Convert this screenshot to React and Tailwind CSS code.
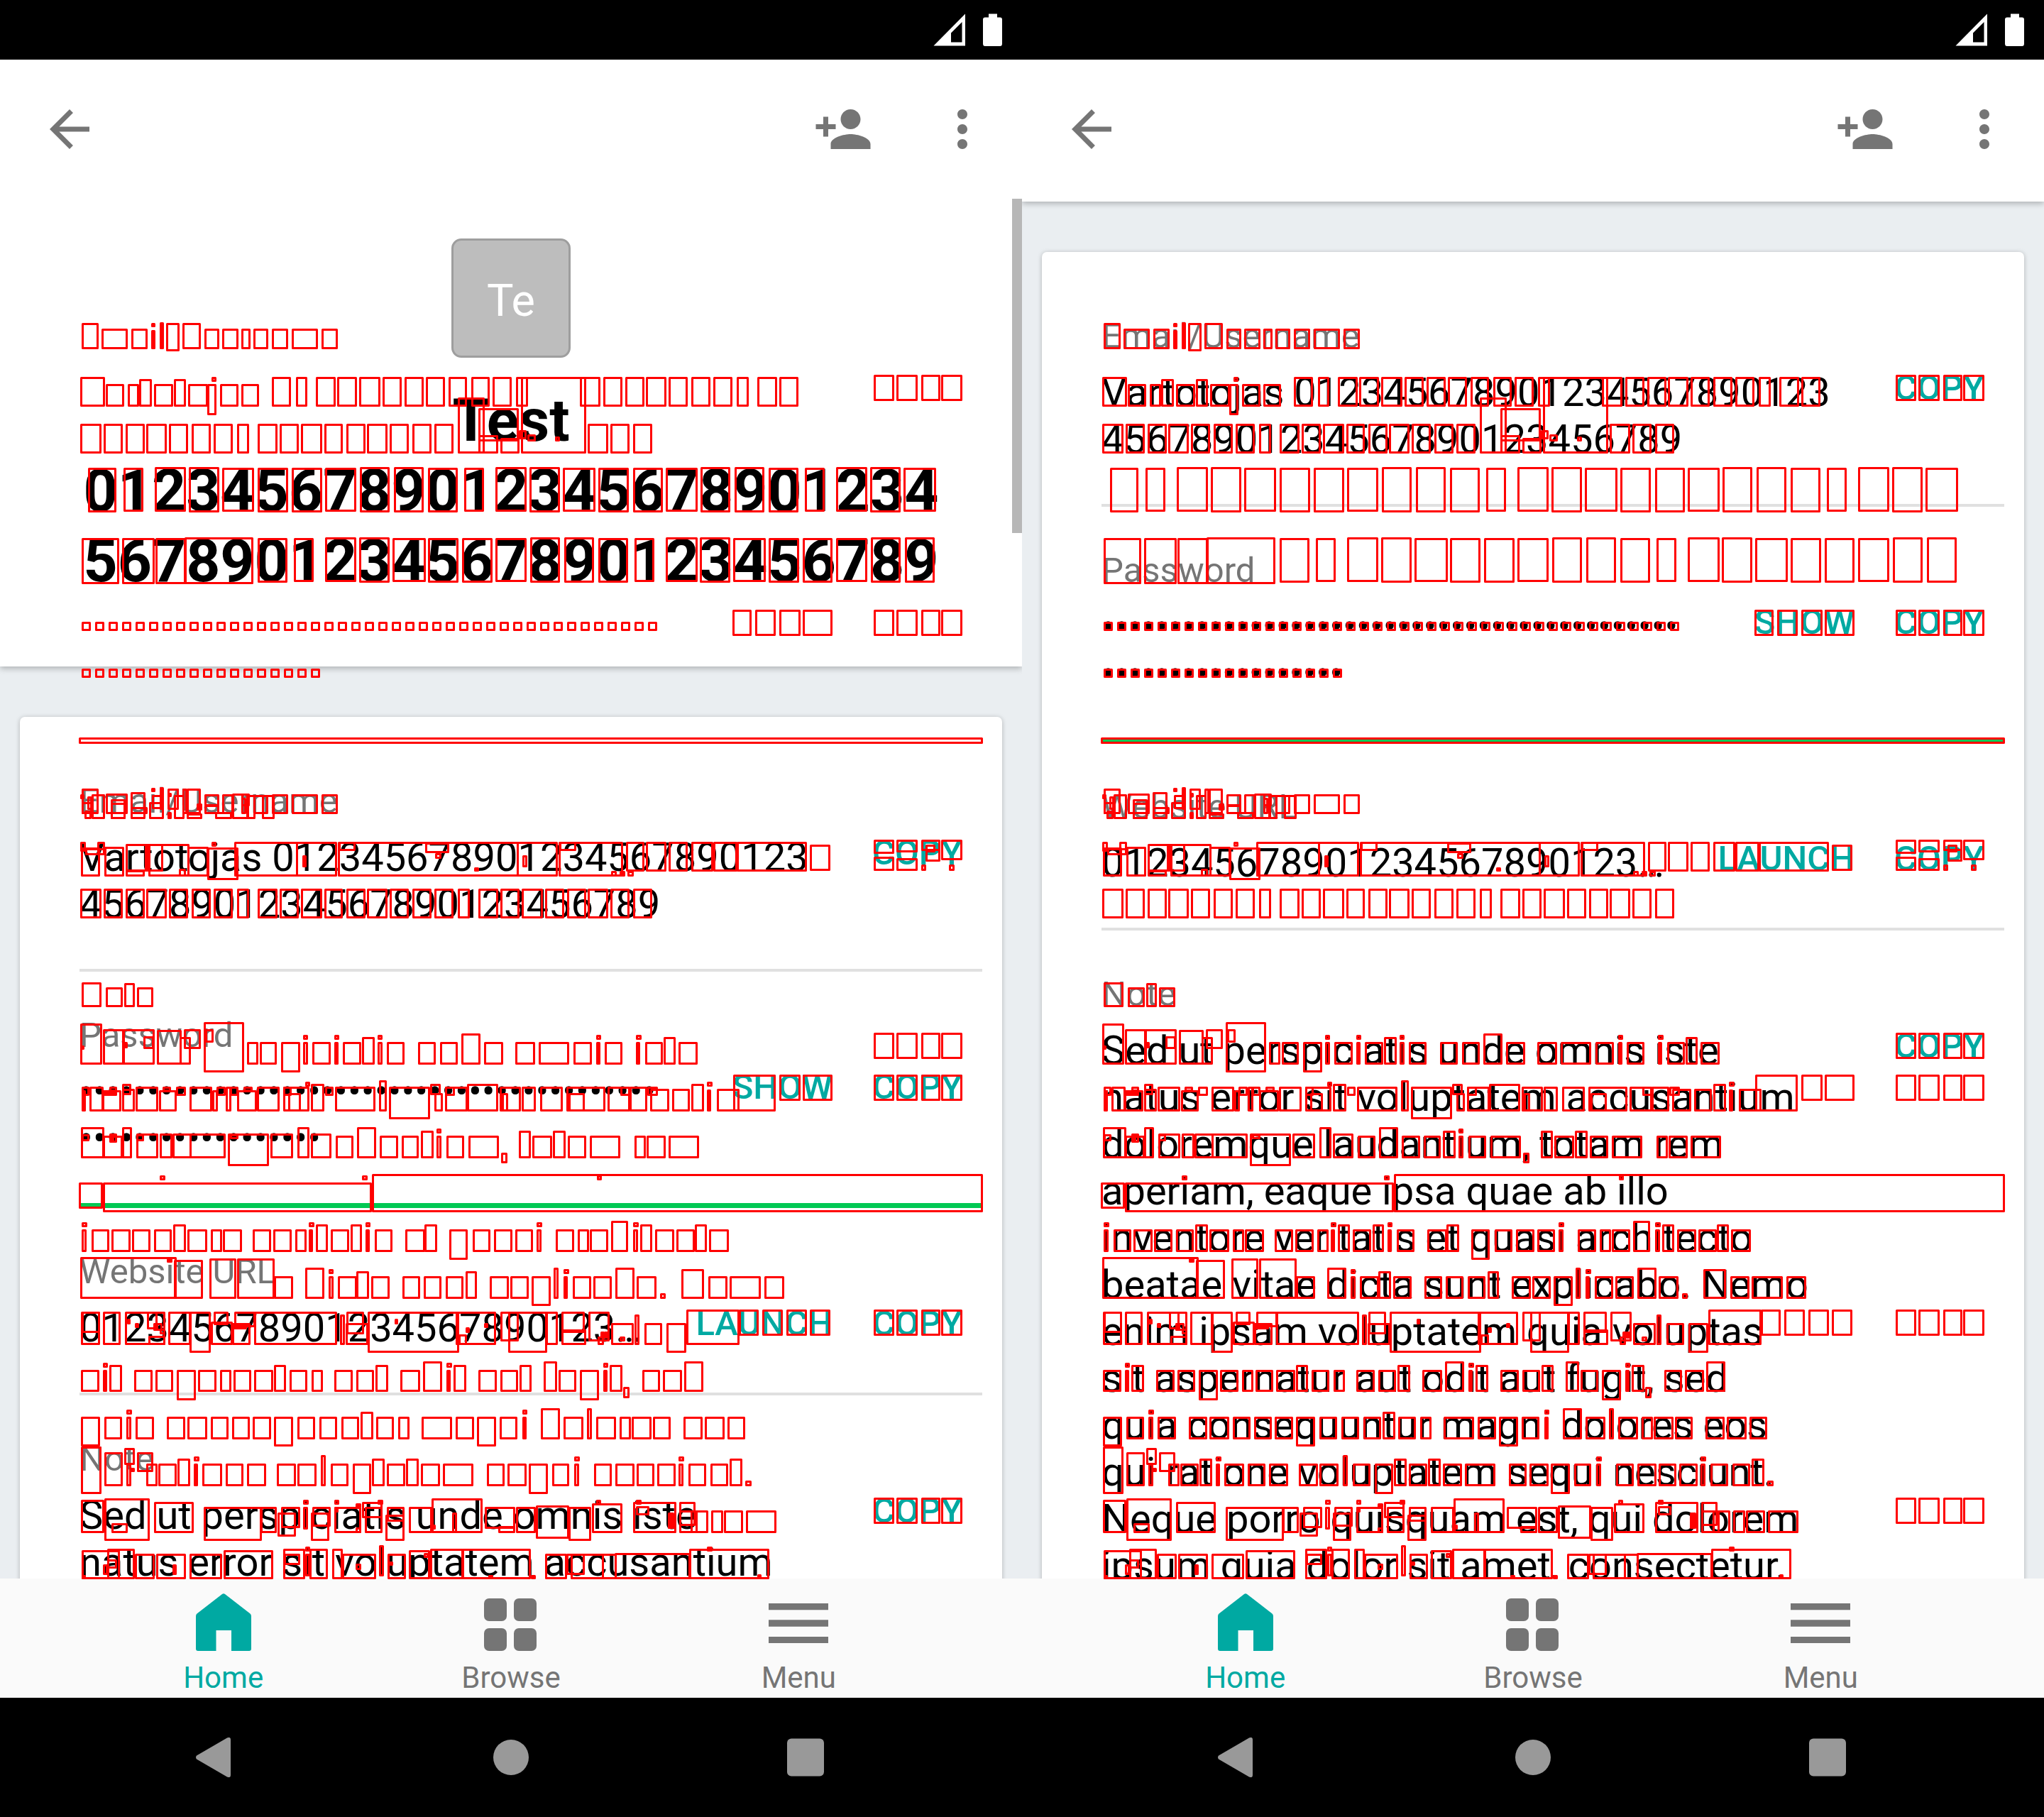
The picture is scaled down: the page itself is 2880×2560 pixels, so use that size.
import React from "react";

/* Highlight rectangles, grouped in rows: [top, bottom, [left, right, left, right, ...]] (outer edges). */
const COPY = [1231, 1260, 1263, 1293, 1298, 1325, 1326, 1356];
const SHOW = [1032, 1059, 1064, 1093, 1098, 1128, 1131, 1173];
const DIGITS = [
  113, 143, 146, 173, 177, 204, 206, 235, 238, 265, 270, 297, 301, 328, 334, 351, 363, 391, 394, 421, 424, 454, 457, 483,
  488, 515, 517, 546, 549, 576, 581, 608, 612, 639, 828, 857, 860, 887, 892, 919,
];
const bullets = (count) => Array.from({ length: count }, (_, i) => [115 + 19 * i, 128 + 19 * i]).flat();

const MARKS = [
  // first label
  [455, 492, [115, 139, 257, 283]],
  [463, 492, [143, 180, 185, 208, 288, 309, 313, 336, 340, 353, 357, 378, 383, 406, 411, 448, 453, 476]],
  [465, 492, [213, 219]],
  [455, 461, [213, 219]],
  [454, 492, [225, 231]],
  [455, 495, [234, 253]],
  // first value
  [531, 573, [113, 148, 383, 410, 417, 433, 445, 473, 475, 503, 506, 536, 539, 566, 570, 597, 600, 627, 632, 658, 664, 690, 694, 721, 727, 744, 817, 846, 850, 877, 881, 908, 910, 939, 942, 969, 974, 1001, 1005, 1032, 1038, 1055, 1067, 1095, 1098, 1125]],
  [541, 573, [149, 175, 180, 196, 217, 244, 265, 293, 310, 336, 340, 365]],
  [534, 573, [196, 214, 245, 262]],
  [541, 585, [292, 305]],
  [531, 538, [298, 305]],
  [528, 565, COPY],
  [531, 639, [734, 826]],
  [597, 639, DIGITS],
  [560, 639, [645, 683]],
  [575, 622, [674, 731]],
  [613, 639, [674, 702]],
  [617, 639, [705, 732]],
  [606, 619, [731, 742]],
  [612, 622, [743, 755]],
  [615, 622, [782, 789]],
  // title digits
  [659, 722, [124, 164, 363, 406, 411, 454, 603, 645, 843, 886, 892, 934, 1083, 1125]],
  [659, 721, [174, 202, 313, 358, 458, 502, 654, 682, 793, 839, 938, 983, 1134, 1162, 1273, 1319]],
  [658, 721, [218, 262, 698, 742, 1178, 1222]],
  [658, 722, [266, 309, 507, 549, 555, 597, 746, 789, 987, 1029, 1035, 1077, 1226, 1269]],
  [758, 823, [115, 168, 172, 218, 219, 262]],
  [757, 823, [260, 357]],
  [758, 821, [363, 405, 603, 646, 651, 694, 843, 885, 1083, 1126, 1131, 1173]],
  [758, 820, [414, 442, 553, 600, 698, 742, 894, 922, 1033, 1079, 1178, 1222]],
  [757, 820, [458, 502, 938, 983]],
  [757, 821, [506, 549, 747, 789, 795, 837, 986, 1029, 1227, 1269, 1275, 1317]],
  // password bullets
  [876, 889, bullets(43)],
  [942, 955, bullets(18)],
  [859, 896, [...SHOW, ...COPY]],
  [1039, 1048, [111, 1385]],
  // second label
  [1111, 1147, [115, 139, 263, 283]],
  [1119, 1126, [113, 119]],
  [1142, 1154, [119, 129]],
  [1119, 1154, [129, 148]],
  [1130, 1147, [115, 130]],
  [1122, 1141, [123, 130]],
  [1118, 1147, [149, 180]],
  [1126, 1154, [156, 177]],
  [1131, 1154, [156, 177]],
  [1116, 1154, [184, 205]],
  [1137, 1147, [184, 208]],
  [1110, 1116, [213, 219]],
  [1109, 1141, [225, 231]],
  [1130, 1154, [210, 231]],
  [1120, 1140, [214, 231]],
  [1111, 1141, [236, 252]],
  [1144, 1154, [236, 242]],
  [1117, 1123, [236, 242]],
  [1120, 1154, [245, 260, 347, 360, 369, 387]],
  [1111, 1147, [257, 264]],
  [1146, 1154, [263, 285]],
  [1132, 1142, [277, 285]],
  [1119, 1136, [288, 309]],
  [1134, 1147, [288, 309]],
  [1119, 1147, [313, 329, 383, 406, 411, 448, 453, 476]],
  [1144, 1154, [303, 327]],
  [1118, 1154, [327, 351]],
  [1118, 1136, [340, 352]],
  [1124, 1147, [340, 347]],
  [1120, 1147, [357, 378]],
  // second value
  [1186, 1200, [113, 121]],
  [1186, 1205, [137, 148]],
  [1194, 1235, [114, 141]],
  [1195, 1205, [120, 148]],
  [1193, 1235, [147, 175, 264, 294]],
  [1189, 1228, [177, 210, 204, 230]],
  [1226, 1235, [177, 204]],
  [1189, 1235, [209, 267]],
  [1224, 1235, [252, 262]],
  [1194, 1240, [292, 336]],
  [1186, 1193, [298, 305]],
  [1186, 1235, [330, 420, 417, 475, 476, 731, 728, 786, 787, 878]],
  [1205, 1222, [426, 432, 736, 743]],
  [1186, 1199, [477, 501, 788, 812]],
  [1187, 1202, [599, 633]],
  [1202, 1210, [613, 622]],
  [1222, 1228, [668, 675]],
  [1227, 1235, [861, 869, 873, 881, 884, 893]],
  [1186, 1228, [882, 908, 910, 939, 942, 969, 974, 1005, 1005, 1039, 1038, 1137]],
  [1190, 1227, [1141, 1170]],
  [1183, 1203, [1231, 1260]],
  [1207, 1227, [1231, 1260]],
  [1183, 1201, [1263, 1293]],
  [1209, 1227, [1263, 1293]],
  [1183, 1199, [1298, 1325]],
  [1190, 1201, [1304, 1318]],
  [1196, 1214, [1304, 1325]],
  [1183, 1212, [1326, 1356]],
  [1218, 1227, [1298, 1305, 1337, 1345]],
  [1252, 1294, [...DIGITS, 645, 662, 674, 702, 705, 732, 735, 765, 768, 795, 799, 826]],
  // note label
  [1384, 1419, [115, 143]],
  [1391, 1419, [149, 173, 193, 216]],
  [1385, 1419, [175, 190]],
  [1455, 1492, COPY],
  // line 1
  [1442, 1500, [113, 144]],
  [1450, 1500, [145, 175, 173, 218]],
  [1460, 1478, [202, 217]],
  [1451, 1500, [221, 256]],
  [1461, 1500, [253, 269]],
  [1450, 1478, [259, 283]],
  [1440, 1511, [287, 344]],
  [1450, 1469, [289, 301]],
  [1473, 1479, [113, 119]],
  [1468, 1477, [174, 180]],
  [1468, 1500, [348, 364, 366, 390, 427, 434, 440, 466, 471, 477, 483, 509, 532, 539, 545, 570, 589, 614, 620, 645, 682, 709, 726, 754, 759, 802, 808, 834, 840, 846, 852, 877, 896, 902, 909, 934, 956, 983]],
  [1468, 1511, [396, 423]],
  [1458, 1465, [427, 434, 471, 478, 532, 539, 840, 847, 896, 904]],
  [1461, 1500, [510, 528, 935, 952]],
  [1456, 1500, [650, 677]],
  // line 2
  [1531, 1566, [126, 146, 191, 223, 267, 299, 318, 326, 362, 394, 399, 436, 627, 659, 704, 734, 735, 755, 761, 793, 798, 853, 856, 888, 887, 912]],
  [1531, 1566, [472, 529]],
  [1536, 1566, [115, 121, 144, 171, 224, 249, 334, 362, 299, 307]],
  [1531, 1544, [115, 126, 248, 262, 305, 318, 324, 336, 399, 411, 458, 470, 912, 927, 627, 641, 874, 888]],
  [1531, 1538, [154, 165, 229, 241, 343, 356]],
  [1538, 1544, [146, 165]],
  [1534, 1566, [172, 190, 916, 943, 947, 972, 1010, 1042]],
  [1527, 1543, [172, 185, 606, 621]],
  [1540, 1566, [406, 424, 612, 624, 707, 716, 801, 824]],
  [1524, 1531, [430, 437, 996, 1004]],
  [1527, 1566, [438, 457, 658, 702, 974, 992]],
  [1522, 1566, [534, 545]],
  [1531, 1577, [548, 606]],
  [1535, 1566, [996, 1002]],
  [1514, 1566, [1033, 1093]],
  [1514, 1551, [1098, 1128, 1131, 1173, ...COPY]],
  // line 3
  [1588, 1632, [114, 147, 172, 186, 419, 436, 503, 530]],
  [1598, 1608, [115, 126, 192, 203]],
  [1600, 1632, [145, 173, 473, 498, 535, 561, 566, 590, 615, 622, 629, 654, 660, 703, 750, 778, 800, 826, 831, 874, 894, 910, 911, 938, 942, 985]],
  [1597, 1610, [154, 160, 158, 165]],
  [1597, 1632, [192, 223, 225, 243, 243, 270, 267, 318, 381, 413, 438, 467]],
  [1597, 1643, [321, 379]],
  [1598, 1605, [324, 336]],
  [1593, 1632, [593, 611, 731, 748, 779, 797]],
  [1590, 1597, [615, 622]],
  [1624, 1639, [706, 715]],
  // line 4
  [1666, 1703, [111, 145]],
  [1666, 1708, [145, 524]],
  [1654, 1708, [524, 1385]],
  [1656, 1663, [225, 233, 510, 518, 841, 848]],
  // line 5
  [1732, 1764, [115, 122, 129, 154, 157, 184, 186, 212, 217, 242, 264, 292, 297, 313, 314, 341, 356, 382, 385, 411, 416, 432, 435, 441, 466, 492, 515, 521, 528, 553, 571, 599, 666, 691, 696, 722, 726, 751, 756, 763, 783, 809, 814, 830, 831, 857, 892, 899, 923, 950, 953, 979, 999, 1027]],
  [1722, 1729, [115, 123, 435, 443, 515, 522, 756, 764, 892, 900]],
  [1725, 1764, [244, 262, 445, 462, 494, 510, 598, 616, 902, 919, 979, 996]],
  [1732, 1775, [633, 659]],
  [1720, 1764, [861, 885]],
  // line 6
  [1771, 1830, [113, 249]],
  [1773, 1779, [235, 243]],
  [1775, 1830, [245, 286]],
  [1773, 1830, [295, 333, 334, 387]],
  [1798, 1830, [386, 413, 463, 470, 476, 503, 523, 549, 567, 592, 597, 622, 628, 653, 690, 717, 719, 745, 794, 800, 807, 833, 836, 862, 897, 925, 998, 1025, 1028, 1072, 1077, 1105]],
  [1786, 1830, [430, 457, 780, 787, 867, 894]],
  [1788, 1795, [463, 470, 794, 802]],
  [1791, 1830, [502, 520, 656, 672]],
  [1798, 1840, [749, 776]],
  [1822, 1830, [930, 938]],
  [1788, 1830, [960, 992]],
  // line 7
  [1848, 1895, [114, 141, 145, 170, 176, 233, 237, 269, 358, 475, 642, 699, 769, 786]],
  [1848, 1878, [115, 141, 791, 824]],
  [1848, 1873, [207, 222]],
  [1882, 1895, [209, 233]],
  [1864, 1875, [216, 223, 220, 229]],
  [1872, 1880, [225, 233]],
  [1864, 1871, [190, 196]],
  [1858, 1866, [179, 184, 556, 561]],
  [1848, 1906, [267, 297, 518, 647, 716, 771]],
  [1862, 1895, [297, 328]],
  [1848, 1867, [301, 322]],
  [1864, 1895, [327, 353, 487, 519, 861, 893, 908, 933]],
  [1864, 1873, [328, 348]],
  [1848, 1870, [330, 360]],
  [1852, 1895, [479, 486, 894, 901]],
  [1848, 1880, [488, 513]],
  [1880, 1895, [646, 658]],
  [1870, 1878, [656, 662]],
  [1864, 1871, [682, 688]],
  [1848, 1890, [705, 731, 829, 859]],
  [1873, 1895, [791, 826]],
  [1883, 1895, [842, 851]],
  [1876, 1886, [846, 852, 851, 857]],
  [1883, 1890, [873, 881]],
  [1864, 1906, [939, 967]],
  [1845, 1895, [967, 1042]],
  [1845, 1882, [1041, 1069, 1074, 1103, 1108, 1137, 1141, 1170, ...COPY]],
  // line 8
  [1930, 1961, [114, 140, 145, 151, 189, 215, 219, 244, 279, 305, 310, 326, 329, 354, 358, 385, 408, 433, 439, 455, 471, 497, 502, 527, 564, 592, 629, 635, 674, 700, 705, 730, 787, 812, 850, 856, 905, 930, 934, 961]],
  [1920, 1927, [145, 152, 629, 637, 850, 857]],
  [1923, 1961, [154, 172, 386, 403, 529, 547, 639, 657, 732, 749, 859, 877]],
  [1930, 1973, [249, 276, 817, 844]],
  [1918, 1961, [596, 623, 766, 785, 964, 991]],
  [1954, 1970, [878, 887]],
  // line 9
  [1996, 2038, [114, 141, 386, 413, 672, 699]],
  [1996, 2028, [147, 172, 178, 185, 191, 217, 235, 261, 264, 292, 297, 322, 327, 352, 356, 382, 419, 444, 450, 475, 481, 506, 530, 555, 561, 577, 594, 637, 642, 668, 704, 729, 736, 742, 794, 822, 840, 868, 873, 889, 890, 918, 920, 945, 963, 990, 993, 1021, 1025, 1050]],
  [1986, 1993, [178, 186, 736, 743]],
  [1989, 2028, [508, 526]],
  [1984, 2028, [762, 789, 827, 834]],
  // line 10
  [2038, 2105, [114, 143]],
  [2046, 2094, [147, 173]],
  [2040, 2064, [175, 190]],
  [2046, 2074, [193, 216]],
  [2068, 2074, [184, 190]],
  [2062, 2094, [178, 185, 206, 222, 223, 249, 273, 279, 285, 313, 318, 343, 348, 375, 390, 417, 419, 446, 466, 491, 545, 571, 593, 620, 624, 667, 686, 711, 715, 742, 778, 802, 809, 816, 837, 862, 867, 894, 897, 922, 926, 952, 956, 963, 970, 995, 1001, 1026]],
  [2052, 2059, [273, 281, 809, 817, 956, 964]],
  [2055, 2094, [250, 268, 524, 542, 572, 590, 1028, 1046]],
  [2050, 2094, [452, 459]],
  [2062, 2105, [497, 523, 745, 772]],
  [2086, 2094, [1050, 1059]],
  // line 11
  [2113, 2160, [114, 147]],
  [2111, 2171, [147, 211]],
  [2146, 2160, [157, 180]],
  [2116, 2160, [217, 273, 892, 953]],
  [2123, 2171, [287, 369, 801, 833]],
  [2123, 2160, [367, 390, 471, 509, 514, 539, 576, 609, 727, 755]],
  [2131, 2165, [391, 417]],
  [2123, 2153, [396, 423]],
  [2123, 2155, [427, 434]],
  [2113, 2120, [427, 435, 471, 478, 532, 540, 840, 847, 896, 904]],
  [2123, 2131, [471, 477]],
  [2131, 2171, [438, 464]],
  [2123, 2151, [440, 466]],
  [2118, 2124, [501, 509]],
  [2152, 2160, [501, 509]],
  [2116, 2139, [510, 539]],
  [2134, 2171, [543, 570]],
  [2123, 2144, [545, 570]],
  [2111, 2160, [608, 680]],
  [2131, 2160, [637, 644]],
  [2148, 2155, [608, 614]],
  [2123, 2154, [683, 726]],
  [2150, 2160, [702, 726]],
  [2121, 2168, [755, 802]],
  [2118, 2160, [834, 877]],
  [2122, 2135, [896, 915]],
  [2131, 2154, [941, 947, 944, 950]],
  [2116, 2150, [957, 980]],
  [2128, 2160, [957, 983, 973, 998, 1002, 1019, 1020, 1047, 1051, 1094]],
  [2110, 2147, COPY],
  // line 12
  [2184, 2225, [115, 169, 315, 385, 576, 606]],
  [2204, 2219, [145, 152, 243, 249]],
  [2182, 2225, [151, 190, 399, 430, 436, 462, 468, 483, 606, 653, 651, 748, 971, 1084]],
  [2197, 2210, [151, 165]],
  [2189, 2225, [190, 218, 220, 262, 267, 313, 482, 530, 546, 572, 768, 799, 804, 851, 848, 869]],
  [2189, 2205, [400, 423]],
  [2179, 2186, [430, 437, 996, 1004]],
  [2189, 2221, [430, 437]],
  [2203, 2212, [501, 509]],
  [2177, 2221, [534, 541]],
  [2188, 2195, [597, 604]],
  [2200, 2206, [548, 554]],
  [2219, 2225, [115, 121, 688, 695, 748, 755]],
  [2189, 2219, [798, 824]],
  [2188, 2225, [866, 973]],
  [2218, 2224, [1067, 1073]],
];

const RECTS = MARKS.flatMap(([top, bottom, xs]) => {
  const out = [];
  for (let i = 0; i < xs.length; i += 2) out.push([xs[i], top, xs[i + 1] - xs[i], bottom - top]);
  return out;
});

function Highlights() {
  return (
    <svg viewBox="0 0 1440 2560" className="pointer-events-none absolute inset-0 h-full w-full" aria-hidden="true">
      <g fill="none" stroke="#ff0000" strokeWidth="3" strokeLinejoin="round">
        {RECTS.map(([x, y, w, h], i) => (
          <rect key={i} x={x + 1.5} y={y + 1.5} width={w - 3} height={h - 3} />
        ))}
      </g>
    </svg>
  );
}

function StatusBar() {
  return (
    <div className="flex h-[84px] shrink-0 items-center justify-end gap-[24px] bg-black pr-[28px]">
      <svg width="46" height="46" viewBox="0 0 46 46" fill="#fff" aria-hidden="true">
        <path fillRule="evenodd" d="M0.5 45.5L45 0.5V45.5ZM25 40.5H40.5V12L25 27.5Z" />
      </svg>
      <svg width="27" height="46" viewBox="0 0 27 46" fill="#fff" aria-hidden="true">
        <path d="M8 0.5H20V5.5H24Q27 5.5 27 8.500V42.500Q27 46 24 46H3Q0 46 0 42.500V8.500Q0 5.500 3 5.500H8Z" />
      </svg>
    </div>
  );
}

const ICONS = {
  back: "M20 11H7.830l5.590-5.590L12 4l-8 8 8 8 1.410-1.410L7.830 13H20v-2z",
  add: "M15 12c2.210 0 4-1.790 4-4s-1.790-4-4-4-4 1.790-4 4 1.790 4 4 4zm-9-2V7H4v3H1v2h3v3h2v-3h3v-2H6zm9 4c-2.670 0-8 1.340-8 4v2h16v-2c0-2.660-5.330-4-8-4z",
  more: "M12 8c1.100 0 2-.9 2-2s-.9-2-2-2-2 .9-2 2 .9 2 2 2zm0 2c-1.100 0-2 .9-2 2s.9 2 2 2 2-.9 2-2-.9-2-2-2zm0 6c-1.100 0-2 .9-2 2s.9 2 2 2 2-.9 2-2-.9-2-2-2z",
};

function BarButton({ name, label }) {
  return (
    <button type="button" aria-label={label}>
      <svg width="84" height="84" viewBox="0 0 24 24" fill="#757575" aria-hidden="true">
        <path d={ICONS[name]} />
      </svg>
    </button>
  );
}

function AppBar({ raised }) {
  return (
    <header className={raised ? "relative z-10 shrink-0 bg-white pb-1 shadow-[0_3px_8px_rgba(0,0,0,0.25)]" : "shrink-0 bg-white"}>
      <div className="flex h-[196px] items-center pl-[56px] pr-[42px]">
        <BarButton name="back" label="Back" />
        <div className="ml-auto flex gap-[84px]">
          <BarButton name="add" label="Share" />
          <BarButton name="more" label="More options" />
        </div>
      </div>
    </header>
  );
}

function Field({ label, value, actions, bar }) {
  return (
    <section>
      <div className="pb-[58px] pl-[84px] pr-[56px] pt-[61px]">
        <h2 className="text-[49px] leading-[58px] text-[#757575]">{label}</h2>
        <div className="mt-[17px] flex items-start justify-between">
          <p className="whitespace-pre text-[56px] leading-[66px] text-black">{value}</p>
          <div className="flex shrink-0 gap-[56px]">
            {actions.map((a) => (
              <button key={a} type="button" className="text-[49px] font-medium leading-[54px] text-[#00a9a2]">
                {a}
              </button>
            ))}
          </div>
        </div>
      </div>
      {bar === "strength" && <div className="ml-[84px] mr-[28px] h-[7px] bg-[#00c853]" />}
      {bar === "line" && <div className="ml-[84px] mr-[28px] h-[4px] bg-[#e0e0e0]" />}
    </section>
  );
}

const NOTE = `Sed ut perspiciatis unde omnis iste
natus error sit voluptatem accusantium
doloremque laudantium, totam rem
aperiam, eaque ipsa quae ab illo
inventore veritatis et quasi architecto
beatae vitae dicta sunt explicabo. Nemo
enim ipsam voluptatem quia voluptas
sit aspernatur aut odit aut fugit, sed
quia consequuntur magni dolores eos
qui ratione voluptatem sequi nesciunt.
Neque porro quisquam est, qui dolorem
ipsum quia dolor sit amet, consectetur,`;

function DetailsCard() {
  return (
    <div className="mx-[28px] mt-[71px] rounded-[7px] bg-white pt-[29px] shadow-[0_1px_6px_rgba(0,0,0,0.25)]">
      <Field
        label="Email/Username"
        value={"Vartotojas 012345678901234567890123\n45678901234567890123456789"}
        actions={["COPY"]}
        bar="line"
      />
      <Field label="Password" value={"•".repeat(43) + "\n" + "•".repeat(18)} actions={["SHOW", "COPY"]} bar="strength" />
      <Field label="Website URL" value="012345678901234567890123…" actions={["LAUNCH", "COPY"]} bar="line" />
      <Field label="Note" value={NOTE} actions={["COPY"]} />
    </div>
  );
}

function ItemHeader() {
  return (
    <div className="bg-white pb-[99px] pt-[56px] shadow-[0_3px_8px_rgba(0,0,0,0.25)]">
      <div className="mx-auto flex h-[168px] w-[168px] items-center justify-center rounded-[14px] border-[3px] border-[#9e9e9e] bg-[#bdbdbd] pt-[7px] text-[63px] leading-[74px] text-white">
        Te
      </div>
      <h1 className="mt-[39px] whitespace-pre-line text-center text-[84px] font-bold leading-[99px] text-black">
        {"Test\n0123456789012345678901234\n5678901234567890123456789"}
      </h1>
    </div>
  );
}

function TabBar() {
  return (
    <nav className="grid h-[168px] shrink-0 grid-cols-3 bg-[#fafafa] px-[112px] text-[42px] leading-[50px] text-[#757575]">
      <button type="button" className="flex flex-col items-center pt-[14px] text-[#00a9a2]">
        <svg width="98" height="98" viewBox="0 0 98 98" fill="currentColor" aria-hidden="true">
          <path d="M47 8Q49 6.500 51 8L86.500 35.500Q88 36.700 88 39V85Q88 88 85 88H60V59H38.500V88H13Q10 88 10 85V39Q10 36.700 11.500 35.500Z" />
        </svg>
        <span className="mt-[3px]">Home</span>
      </button>
      <button type="button" className="flex flex-col items-center pt-[14px]">
        <svg width="98" height="98" viewBox="0 0 98 98" fill="currentColor" aria-hidden="true">
          <rect x="11" y="14" width="32" height="32" rx="7" />
          <rect x="53" y="14" width="32" height="32" rx="7" />
          <rect x="11" y="56" width="32" height="32" rx="7" />
          <rect x="53" y="56" width="32" height="32" rx="7" />
        </svg>
        <span className="mt-[3px]">Browse</span>
      </button>
      <button type="button" className="flex flex-col items-center pt-[14px]">
        <svg width="98" height="98" viewBox="0 0 98 98" fill="currentColor" aria-hidden="true">
          <path d="M7 21H91V30.300H7ZM7 44.300H91V53.700H7ZM7 68H91V77H7Z" />
        </svg>
        <span className="mt-[3px]">Menu</span>
      </button>
    </nav>
  );
}

function SystemBar() {
  return (
    <div className="flex h-[168px] shrink-0 items-center justify-between bg-black pl-[273px] pr-[277px]">
      <button type="button" aria-label="System back">
        <svg width="56" height="56" viewBox="0 0 56 56" fill="#999" aria-hidden="true">
          <path d="M4 25.500L47 0.500Q52 -1.500 52 3V53Q52 57.500 47 55.500L4 30.500Q2 28 4 25.500Z" />
        </svg>
      </button>
      <button type="button" aria-label="System home">
        <svg width="56" height="56" viewBox="0 0 56 56" fill="#999" aria-hidden="true">
          <circle cx="30" cy="28" r="25" />
        </svg>
      </button>
      <button type="button" aria-label="Recent apps">
        <svg width="56" height="56" viewBox="0 0 56 56" fill="#999" aria-hidden="true">
          <rect x="2" y="1.500" width="52" height="53" rx="6" />
        </svg>
      </button>
    </div>
  );
}

function Phone({ scrolled }) {
  return (
    <div className="relative flex h-screen min-w-0 flex-col overflow-hidden bg-[#eaeef1]">
      <StatusBar />
      <AppBar raised={scrolled} />
      <main className="relative min-h-0 flex-1 overflow-hidden">
        {!scrolled && <ItemHeader />}
        <DetailsCard />
        {!scrolled && <div className="absolute right-0 top-0 h-[471px] w-[14px] bg-[#b7b7b7]" />}
      </main>
      <TabBar />
      <SystemBar />
      <Highlights />
    </div>
  );
}

export default function App() {
  return (
    <div className="grid grid-cols-2 font-['Roboto',sans-serif]">
      <Phone scrolled={false} />
      <Phone scrolled />
    </div>
  );
}
